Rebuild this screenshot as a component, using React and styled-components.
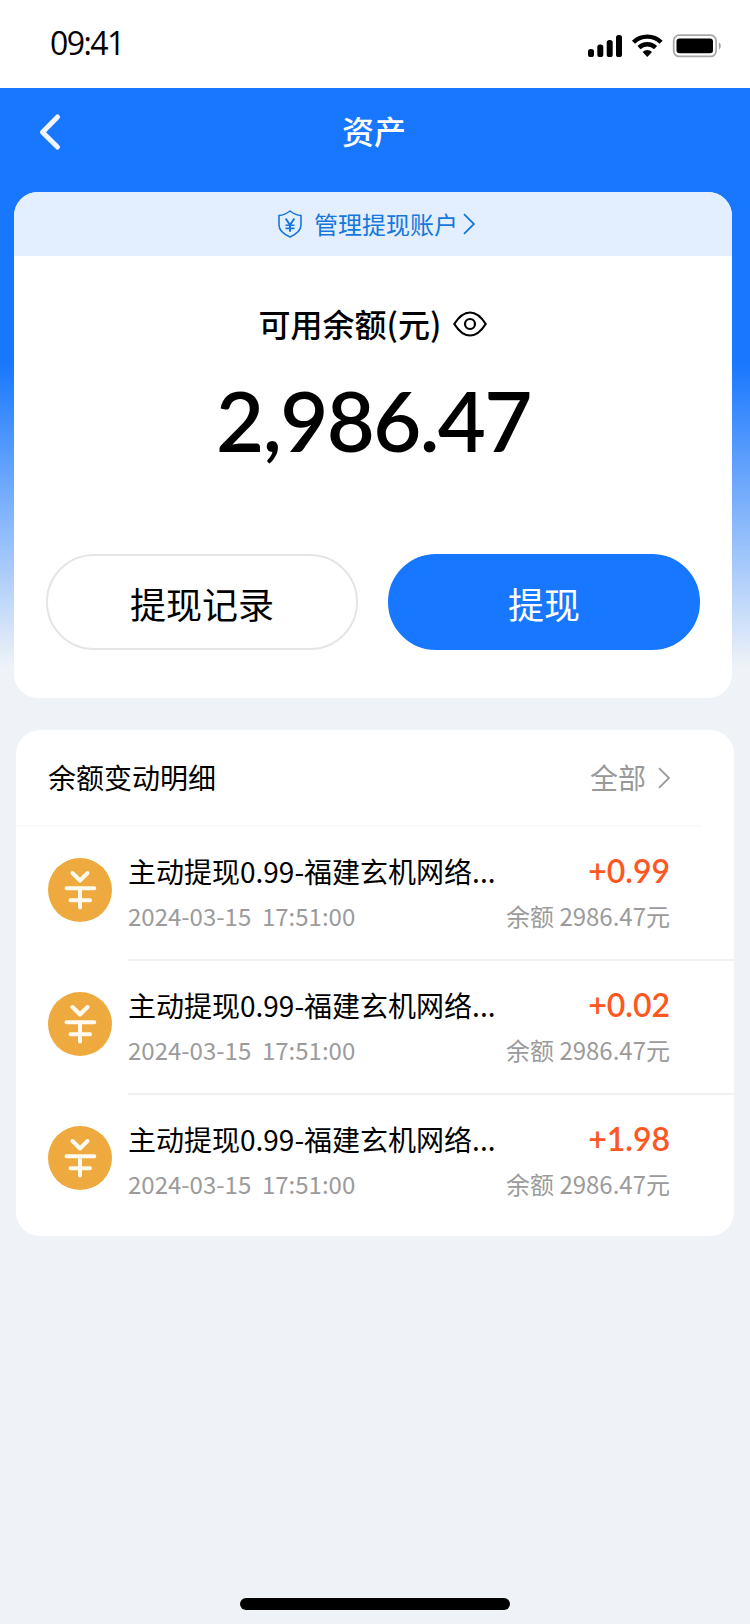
import React from "react";
import styled, { createGlobalStyle } from "styled-components";

const GlobalStyle = createGlobalStyle`
  * {
    box-sizing: border-box;
  }

  body {
    margin: 0;
    background: #eff3f8;
    font-family: "Noto Sans CJK SC", sans-serif;
  }
`;

const Page = styled.div`
  display: flex;
  flex-direction: column;
  width: 750px;
  height: 1624px;
  color: #000;
  background: #eff3f8;
`;

const StatusBar = styled.div`
  display: flex;
  align-items: flex-start;
  justify-content: space-between;
  height: 88px;
  padding: 21px 28px 0 50px;
  background: #fff;
`;

const Time = styled.div`
  font-family: "Open Sans", "Noto Sans", sans-serif;
  font-size: 32px;
  line-height: 44px;
  letter-spacing: -1.6px;
`;

const StatusIcons = styled.svg`
  display: block;
  margin-top: 11px;
`;

const Hero = styled.div`
  height: 610px;
  padding: 0 18px 0 14px;
  background: linear-gradient(#1777ff 0, #1777ff 274px, #eff3f8 580px);
`;

const NavBar = styled.div`
  display: grid;
  grid-template-columns: 60px 1fr 60px;
  align-items: center;
  height: 104px;
  padding: 0 14px 16px 16px;
`;

const NavTitle = styled.div`
  margin-bottom: 4px;
  font-size: 32px;
  font-weight: 500;
  line-height: 48px;
  text-align: center;
  color: #fff;
`;

const Card = styled.div`
  height: 506px;
  overflow: hidden;
  border-radius: 24px;
  background: #fff;
`;

const AccountLink = styled.div`
  display: flex;
  align-items: center;
  height: 64px;
  padding-left: 263px;
  font-size: 24px;
  line-height: 36px;
  color: #1677dc;
  background: #e3effe;

  span {
    margin: 0 5px 1px 11px;
  }
`;

const BalanceLabel = styled.div`
  display: flex;
  align-items: center;
  justify-content: center;
  gap: 12px;
  margin-top: 43px;
  font-size: 32px;
  font-weight: 500;
  line-height: 48px;

  svg {
    margin-top: 2px;
  }
`;

const Balance = styled.div`
  margin-top: 23px;
  padding-left: 1px;
  font-family: Lato, sans-serif;
  font-size: 83px;
  font-weight: 600;
  line-height: 100px;
  letter-spacing: -1.6px;
  text-align: center;
`;

const Actions = styled.div`
  display: grid;
  grid-template-columns: 1fr 1fr;
  gap: 30px;
  margin-top: 84px;
  padding: 0 32px;
`;

const Button = styled.button`
  height: 96px;
  padding: 2px 0 0;
  border: 2px solid ${props => (props.$primary ? "#1777ff" : "#e5e5e5")};
  border-radius: 48px;
  font-family: inherit;
  font-size: 36px;
  line-height: 54px;
  color: ${props => (props.$primary ? "#fff" : "#000")};
  background: ${props => (props.$primary ? "#1777ff" : "#fff")};
`;

const List = styled.div`
  width: 718px;
  height: 506px;
  margin: 32px 0 0 16px;
  border-radius: 24px;
  background: #fff;
`;

const ListHead = styled.div`
  display: flex;
  align-items: center;
  justify-content: space-between;
  height: 97px;
  margin-right: 32px;
  padding: 0 32px;
  border-bottom: 2px solid #f9f9f9;
  font-size: 28px;
  line-height: 42px;

  span {
    margin-bottom: 2px;
  }
`;

const More = styled.div`
  display: flex;
  align-items: center;
  gap: 12px;
  color: #999;
`;

const Row = styled.div`
  display: flex;
  height: 134px;
  padding-left: 32px;
`;

const Coin = styled.svg`
  flex: none;
  margin: 31px 16px 0 0;
`;

const RowBody = styled.div`
  display: flex;
  flex: 1;
  justify-content: space-between;
  padding: 23px 64px 0 0;
  border-bottom: ${props => (props.$last ? "none" : "2px solid #f1f1f1")};
`;

const Column = styled.div`
  text-align: ${props => props.$align || "left"};
`;

const Title = styled.div`
  font-size: 28px;
  line-height: 42px;
`;

const Note = styled.div`
  margin-top: 6px;
  font-size: 24px;
  line-height: 36px;
  white-space: pre;
  color: #9b9b9b;
`;

const Amount = styled.div`
  font-family: Lato, sans-serif;
  font-size: 32px;
  font-weight: 600;
  line-height: 42px;
  color: #ff5722;
`;

const HomeBar = styled.div`
  width: 270px;
  height: 12px;
  margin: auto auto 14px;
  border-radius: 6px;
  background: #000;
`;

const records = [
  { id: 1, amount: "+0.99" },
  { id: 2, amount: "+0.02" },
  { id: 3, amount: "+1.98" }
];

const Arrow = ({ color }) => (
  <svg width="12" height="22" viewBox="0 0 12 22" fill="none">
    <path d="M1 1.2L11 11L1 20.8" stroke={color} strokeWidth="1.8" />
  </svg>
);

const RecordRow = ({ record, last }) => (
  <Row>
    <Coin width="64" height="64" viewBox="0 0 64 64">
      <circle cx="32" cy="32" r="32" fill="#eeaa3f" />
      <path
        d="M24.5 15L32 22.5L39.5 15M18.5 30.3H46.3M22.5 42.3H42M32 30.3V49.5"
        fill="none"
        stroke="#fffaf0"
        strokeWidth="4"
        strokeLinecap="round"
        strokeLinejoin="round"
      />
    </Coin>
    <RowBody $last={last}>
      <Column>
        <Title>主动提现0.99-福建玄机网络...</Title>
        <Note>2024-03-15  17:51:00</Note>
      </Column>
      <Column $align="right">
        <Amount>{record.amount}</Amount>
        <Note>余额 2986.47元</Note>
      </Column>
    </RowBody>
  </Row>
);

const App = () => {
  return (
    <Page>
      <GlobalStyle />
      <StatusBar>
        <Time>09:41</Time>
        <StatusIcons width="134" height="28" viewBox="588 32 134 28">
          <rect x="588" y="49" width="6" height="8" rx="2.6" />
          <rect x="597.3" y="44.6" width="6" height="12.4" rx="2.6" />
          <rect x="606.7" y="40" width="6" height="17" rx="2.6" />
          <rect x="616" y="35" width="6" height="22" rx="2.6" />
          <g fill="none" stroke="#000" strokeWidth="4.4">
            <path d="M633.5 42.3a19.5 19.5 0 0 1 27.6 0" />
            <path d="M639 47.6a12 12 0 0 1 16.6 0" />
          </g>
          <path d="M642.6 51.9a7 7 0 0 1 9.4 0L647.3 57z" />
          <rect x="673.7" y="35.2" width="42.4" height="21.2" rx="5.5" fill="none" stroke="#a6a6a6" strokeWidth="1.7" />
          <rect x="676.5" y="38.5" width="36.5" height="14.7" rx="3" />
          <path d="M718.8 42.2a4.5 4.5 0 0 1 0 7.6z" fill="#a6a6a6" />
        </StatusIcons>
      </StatusBar>

      <Hero>
        <NavBar>
          <svg width="40" height="40" viewBox="0 0 40 40" fill="none">
            <path
              d="M27.5 5L12.5 20.3L27.5 35"
              stroke="#f2f5fb"
              strokeWidth="5"
              strokeLinecap="round"
              strokeLinejoin="round"
            />
          </svg>
          <NavTitle>资产</NavTitle>
        </NavBar>

        <Card>
          <AccountLink>
            <svg width="26" height="30" viewBox="0 0 26 30" fill="none" stroke="#1677dc" strokeWidth="1.6">
              <path d="M13 2Q8 6 2 6.5V16Q2 23 13 28Q24 23 24 16V6.5Q18 6 13 2Z" />
              <path d="M8.7 9.5L13 16L17.3 9.5M13 16V22.8" strokeWidth="2" />
              <path d="M8.5 16.2H17.5M8.5 19.4H17.5" />
            </svg>
            <span>管理提现账户</span>
            <Arrow color="#1677dc" />
          </AccountLink>

          <BalanceLabel>
            可用余额(元)
            <svg width="34" height="28" viewBox="1 0 34 28" fill="none" stroke="#000" strokeWidth="2.2">
              <path d="M2.3 14Q9.5 2.5 18 2.5Q26.5 2.5 33.7 14Q26.5 25.5 18 25.5Q9.5 25.5 2.3 14Z" />
              <circle cx="18" cy="14" r="5" />
            </svg>
          </BalanceLabel>
          <Balance>2,986.47</Balance>

          <Actions>
            <Button>提现记录</Button>
            <Button $primary>提现</Button>
          </Actions>
        </Card>
      </Hero>

      <List>
        <ListHead>
          <span>余额变动明细</span>
          <More>
            <span>全部</span>
            <Arrow color="#999" />
          </More>
        </ListHead>
        {records.map((record, i) => (
          <RecordRow key={record.id} record={record} last={i === records.length - 1} />
        ))}
      </List>

      <HomeBar />
    </Page>
  );
};

export default App;
